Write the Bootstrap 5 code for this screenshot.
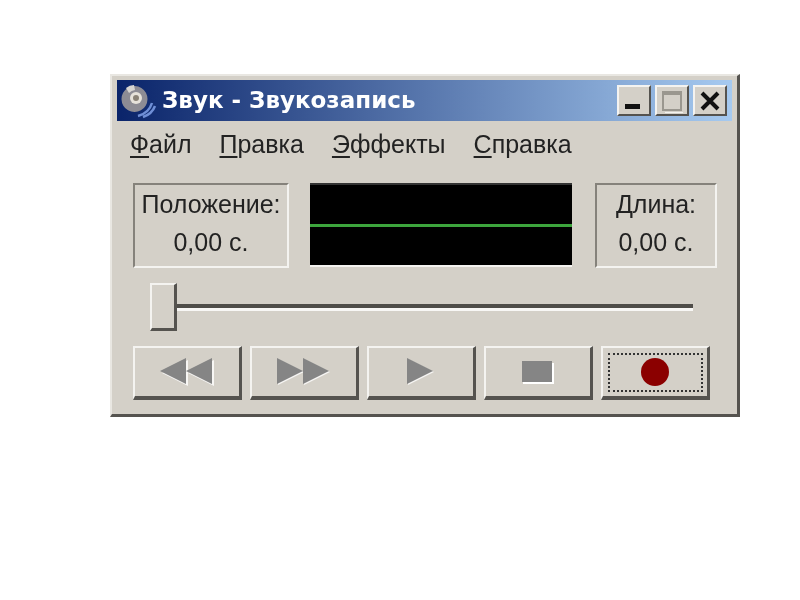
<!doctype html>
<html lang="ru">

<head>
    <meta charset="utf-8">
    <meta name="viewport" content="width=device-width, initial-scale=1">
    <title>Звук - Звукозапись</title>

    <link href="https://cdn.jsdelivr.net/npm/bootstrap@5.3.3/dist/css/bootstrap.min.css" rel="stylesheet">
    <style>
        body {
            background-color: #fff;
            padding: 74px 0 0 110px;
            font-family: "Liberation Sans", Arial, sans-serif;
        }

        .sound-window {
            width: 630px;
            height: 343px;
            background: #d4d0c8;
            border-style: solid;
            border-width: 2px 3px 3px 2px;
            border-color: #e9e7e2 #55534f #55534f #e9e7e2;
            padding: 4px 5px 0 5px;
            filter: blur(0.5px);
            color: #222;
        }

        .title-bar {
            height: 41px;
            background: linear-gradient(90deg, #0a246a, #a6caf0);
            padding: 0 5px 0 4px;
        }

        .title-text {
            color: #fff;
            font-family: "DejaVu Sans", sans-serif;
            font-weight: 700;
            font-size: 23px;
            margin-left: 5px;
        }

        .win-btn {
            width: 34px;
            height: 31px;
            background: #d4d0c8;
            border-style: solid;
            border-width: 2px;
            border-color: #f4f3f0 #55534f #55534f #f4f3f0;
        }

        .menu-bar {
            height: 48px;
            padding-left: 13px;
            gap: 28px;
            font-size: 25px;
        }

        .menu-bar u {
            text-underline-offset: 3px;
        }

        .readout-row {
            padding: 14px 15px 0 16px;
            gap: 21px;
        }

        .readout {
            height: 85px;
            border-style: solid;
            border-width: 2px;
            border-color: #85827b #f4f3f0 #f4f3f0 #85827b;
            font-size: 25px;
            line-height: 38px;
        }

        .readout-pos {
            width: 156px;
        }

        .readout-len {
            width: 122px;
        }

        .wave-box {
            background: #000;
            height: 84px;
            border-bottom: 2px solid #f4f3f0;
            border-top: 2px solid #333;
            margin: 0 2px 0 0;
        }

        .wave-line {
            height: 3px;
            background: #3da53d;
        }

        .seek-row {
            padding: 15px 39px 0 33px;
        }

        .seek-thumb {
            width: 27px;
            height: 48px;
            background: #d4d0c8;
            border-style: solid;
            border-width: 2px 3px 3px 2px;
            border-color: #f4f3f0 #55534f #55534f #f4f3f0;
        }

        .seek-track {
            height: 7px;
            background: #4f4d49;
            border-bottom: 3px solid #f8f7f5;
        }

        .button-row {
            padding: 15px 0 0 16px;
            gap: 8px;
        }

        .btn.tool-btn {
            width: 109px;
            height: 54px;
            padding: 0;
            background: #d4d0c8;
            border-style: solid;
            border-width: 2px 3px 4px 2px;
            border-color: #f4f3f0 #55534f #55534f #f4f3f0;
            border-radius: 0;
        }

        .focus-box {
            width: 95px;
            height: 39px;
            border: 2px dotted #333;
        }
    </style>
</head>

<body>
    <div class="sound-window d-flex flex-column">
        <div class="title-bar d-flex align-items-center">
            <svg width="36" height="36" viewBox="0 0 36 36">
                <path d="M14 3a13 13 0 1 1-1 0z" fill="#8d8c94" />
                <path d="M5 5a14 14 0 0 1 8-3l1 5a9 9 0 0 0-6 3z" fill="#d8d6d2" />
                <circle cx="15" cy="15" r="6" fill="#e6e2da" />
                <circle cx="15" cy="15" r="3" fill="#8a8276" />
                <path d="M17 33q11-3 14-13M22 34q9-3 12-11" fill="none" stroke="#6f8fd6" stroke-width="2.5" />
            </svg>
            <span class="title-text flex-grow-1">Звук - Звукозапись</span>
            <div class="d-flex">
                <div class="win-btn d-flex align-items-end justify-content-center pb-1">
                    <svg width="20" height="6"><rect x="1" width="15" height="5" fill="#111" /></svg>
                </div>
                <div class="win-btn d-flex align-items-center justify-content-center ms-1">
                    <svg width="24" height="24"><rect x="3" y="3" width="18" height="18" fill="none" stroke="#9a978f" stroke-width="2" /><rect x="3" y="3" width="18" height="3" fill="#9a978f" /><rect x="5" y="23" width="18" height="1" fill="#f4f3f0" /></svg>
                </div>
                <div class="win-btn d-flex align-items-center justify-content-center ms-1">
                    <svg width="24" height="22" viewBox="0 0 24 22"><path d="M4 3 20 19M20 3 4 19" stroke="#111" stroke-width="4" /></svg>
                </div>
            </div>
        </div>

        <div class="menu-bar d-flex align-items-center">
            <span><u>Ф</u>айл</span>
            <span><u>П</u>равка</span>
            <span><u>Э</u>ффекты</span>
            <span><u>С</u>правка</span>
        </div>

        <div class="readout-row d-flex">
            <div class="readout readout-pos text-center">Положение:<br>0,00 с.</div>
            <div class="wave-box flex-grow-1 d-flex align-items-center">
                <div class="wave-line w-100"></div>
            </div>
            <div class="readout readout-len text-center">Длина:<br>0,00 с.</div>
        </div>

        <div class="seek-row d-flex align-items-center">
            <div class="seek-thumb"></div>
            <div class="seek-track flex-grow-1"></div>
        </div>

        <div class="button-row d-flex">
            <button class="btn tool-btn d-flex align-items-center justify-content-center" type="button">
                <svg width="54" height="28" viewBox="0 0 54 28">
                    <path d="M27 1 V27 L1 14zM53 1V27L27 14z" fill="#fff" transform="translate(1 1)" opacity=".8" />
                    <path d="M26 0V26L0 13zM52 0V26L26 13z" fill="#858585" />
                </svg>
            </button>
            <button class="btn tool-btn d-flex align-items-center justify-content-center" type="button">
                <svg width="54" height="28" viewBox="0 0 54 28">
                    <path d="M1 1V27L27 14zM27 1V27L53 14z" fill="#fff" opacity=".8" />
                    <path d="M0 0V26L26 13zM26 0V26L52 13z" fill="#858585" />
                </svg>
            </button>
            <button class="btn tool-btn d-flex align-items-center justify-content-center" type="button">
                <svg width="28" height="28" viewBox="0 0 28 28">
                    <path d="M1 1V27L27 14z" fill="#fff" opacity=".8" />
                    <path d="M0 0V26L26 13z" fill="#858585" />
                </svg>
            </button>
            <button class="btn tool-btn d-flex align-items-center justify-content-center" type="button">
                <svg width="32" height="23" viewBox="0 0 32 23">
                    <rect x="1" y="2" width="31" height="21" fill="#fff" />
                    <rect width="30" height="21" fill="#858585" />
                </svg>
            </button>
            <button class="btn tool-btn d-flex align-items-center justify-content-center" type="button">
                <span class="focus-box d-flex align-items-center justify-content-center">
                    <svg width="30" height="30" viewBox="0 0 30 30"><circle cx="15" cy="15" r="14" fill="#8b0000" /></svg>
                </span>
            </button>
        </div>
    </div>

    <script src="https://cdn.jsdelivr.net/npm/bootstrap@5.3.3/dist/js/bootstrap.bundle.min.js"></script>
</body>

</html>
